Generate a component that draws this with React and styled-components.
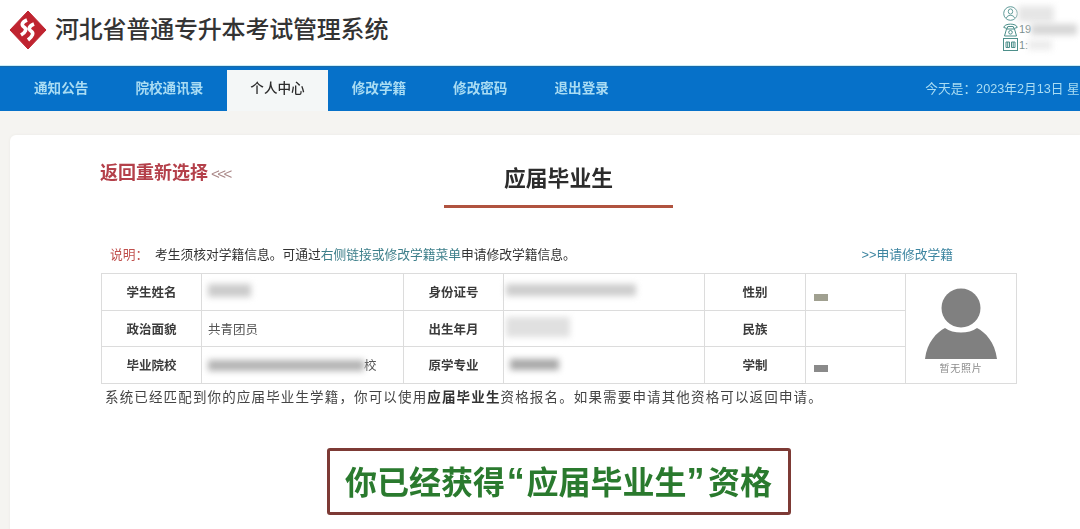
import styled, { createGlobalStyle } from "styled-components";

const GlobalStyle = createGlobalStyle`
  html, body {
    margin: 0;
    padding: 0;
    background: #f5f4f1;
  }
  body {
    font-family: "Liberation Sans", "Noto Sans CJK SC", sans-serif;
    overflow: hidden;
  }
`;

const tabs = ["通知公告", "院校通讯录", "个人中心", "修改学籍", "修改密码", "退出登录"];

function LogoMark() {
  return (
    <svg width="38" height="40" viewBox="0 0 38 40">
      <path d="M19 1 L37 20 L19 39 L1 20 Z" fill="#bf2430" stroke="#bf2430" strokeWidth="1" strokeLinejoin="round" />
      <path
        d="M18 10 C13 12 12 15 15 17 C18 19 17 22 12 25 M25 14 C20 16 19 19 22 21 C25 23 24 26 19 30"
        fill="none"
        stroke="#fff"
        strokeWidth="3.6"
      />
    </svg>
  );
}

function PersonIcon() {
  return (
    <svg width="15" height="15" viewBox="0 0 15 15" fill="none" stroke="#5f9a98" strokeWidth="1">
      <circle cx="7.5" cy="7.5" r="6.8" />
      <ellipse cx="7.5" cy="5.5" rx="2.2" ry="2.6" />
      <path d="M3.5 12 C4 8.5 11 8.5 11.5 12" />
    </svg>
  );
}

function PhoneIcon() {
  return (
    <svg width="15" height="15" viewBox="0 0 15 15" fill="none" stroke="#4d8f8a" strokeWidth="1">
      <path d="M0.8 5.5 C1 1 14 1 14.2 5.5 L10.8 6.5 L10.2 4.5 H4.8 L4.2 6.5 Z" />
      <path d="M3.5 7 H11.5 L13.5 14 H1.5 Z" />
      <circle cx="7.5" cy="10.3" r="1.8" />
    </svg>
  );
}

function FaxIcon() {
  return (
    <svg width="15" height="15" viewBox="0 0 15 15" fill="none" stroke="#4d8f8a" strokeWidth="1">
      <rect x="0.5" y="1.5" width="14" height="12" />
      <path d="M3 5 H6.5 V10.5 H3 Z M8.5 5 H12 V10.5 H8.5 Z M4.7 5 V10.5 M10.2 5 V10.5" />
    </svg>
  );
}

function Avatar() {
  return (
    <svg width="72" height="72" viewBox="0 0 72 72">
      <circle cx="36" cy="20" r="19.5" fill="#808080" />
      <path d="M0 71 C2 54 12 44 20 40 C28 46 44 46 52 40 C60 44 70 54 72 71 Z" fill="#808080" />
    </svg>
  );
}

export default function App() {
  return (
    <Page>
      <GlobalStyle />
      <Header>
        <LogoMark />
        <SiteTitle>河北省普通专升本考试管理系统</SiteTitle>
        <UserBox>
          <UserRow>
            <PersonIcon />
            <Smudge $w={36} $h={16} $tone="#e6e6e6" />
          </UserRow>
          <UserRow>
            <PhoneIcon />
            <UserText>19</UserText>
            <Smudge $w={46} $h={11} $tone="#d6d6d6" />
          </UserRow>
          <UserRow>
            <FaxIcon />
            <UserText>1:</UserText>
            <Smudge $w={24} $h={10} $tone="#ececec" />
          </UserRow>
        </UserBox>
      </Header>

      <NavBar>
        <NavTabs>
          {tabs.map((tab) => (
            <NavTab key={tab} $active={tab === "个人中心"}>
              {tab}
            </NavTab>
          ))}
        </NavTabs>
        <Today>今天是：2023年2月13日 星期一</Today>
      </NavBar>

      <Card>
        <CardHead>
          <BackLink>
            返回重新选择<BackArrows>&lt;&lt;&lt;</BackArrows>
          </BackLink>
          <PageTitle>应届毕业生</PageTitle>
        </CardHead>

        <NoticeRow>
          <Notice>
            <NoticeLabel>说明：</NoticeLabel>
            考生须核对学籍信息。可通过<Teal>右侧链接或修改学籍菜单</Teal>申请修改学籍信息。
          </Notice>
          <ApplyLink>&gt;&gt;申请修改学籍</ApplyLink>
        </NoticeRow>

        <InfoTable>
          <colgroup>
            <col width="100" />
            <col width="202" />
            <col width="100" />
            <col width="201" />
            <col width="101" />
            <col width="100" />
            <col width="111" />
          </colgroup>
          <tbody>
            <tr>
              <Label>学生姓名</Label>
              <Value><Smudge $w={43} $h={13} $tone="#cbcbcb" /></Value>
              <Label>身份证号</Label>
              <Value $tight><Smudge $w={130} $h={12} $tone="#cdcdcd" /></Value>
              <Label>性别</Label>
              <Value><Chip $tone="#a0a090" $drop={12} /></Value>
              <PhotoCell rowSpan={3}>
                <Avatar />
                <PhotoNote>暂无照片</PhotoNote>
              </PhotoCell>
            </tr>
            <tr>
              <Label>政治面貌</Label>
              <Value>共青团员</Value>
              <Label>出生年月</Label>
              <Value $tight><Smudge $w={64} $h={20} $tone="#e0e0e0" /></Value>
              <Label>民族</Label>
              <Value />
            </tr>
            <tr>
              <Label>毕业院校</Label>
              <Value>
                <SchoolLine>
                  <Smudge $w={156} $h={11} $tone="#b4b4b4" />校
                </SchoolLine>
              </Value>
              <Label>原学专业</Label>
              <Value $tight><Indent><Smudge $w={49} $h={11} $tone="#a8a8a8" /></Indent></Value>
              <Label>学制</Label>
              <Value><Chip $tone="#8a8a8a" $drop={8} /></Value>
            </tr>
          </tbody>
        </InfoTable>

        <Summary>
          系统已经匹配到你的应届毕业生学籍，你可以使用<strong>应届毕业生</strong>资格报名。如果需要申请其他资格可以返回申请。
        </Summary>

        <ResultBox>你已经获得<Quote $open>“</Quote>应届毕业生<Quote>”</Quote>资格</ResultBox>
      </Card>
    </Page>
  );
}

const Page = styled.div`
  width: 1080px;
  height: 529px;
  overflow: hidden;
  filter: blur(0.4px);
`;

const Header = styled.header`
  height: 66px;
  box-sizing: border-box;
  padding: 0 0 6px 9px;
  background: #fff;
  display: flex;
  align-items: center;
  gap: 8px;
`;

const SiteTitle = styled.h1`
  margin: 0;
  font-size: 24px;
  line-height: 1;
  font-weight: 500;
  color: #333;
  letter-spacing: -0.2px;
`;

const UserBox = styled.div`
  margin-left: auto;
  width: 77px;
  padding-bottom: 2px;
  display: flex;
  flex-direction: column;
  gap: 0.5px;
`;

const UserRow = styled.div`
  height: 15px;
  display: flex;
  align-items: center;
`;

const UserText = styled.span`
  font-size: 11px;
  color: #7a8f8f;
  margin-left: 1px;
`;

const Smudge = styled.span`
  display: inline-block;
  width: ${(p) => p.$w}px;
  height: ${(p) => p.$h}px;
  background: ${(p) => p.$tone};
  filter: blur(3px);
`;

const Chip = styled.span`
  display: block;
  width: 14px;
  height: 7px;
  margin: ${(p) => p.$drop}px 0 0 2px;
  background: ${(p) => p.$tone};
`;

const NavBar = styled.nav`
  height: 45px;
  box-sizing: border-box;
  border-top: 1px solid #1a6aa8;
  box-shadow: 0 -1px 0 #c9eef8;
  background: #0671c9;
  display: flex;
  align-items: stretch;
  padding-left: 10.5px;
  overflow: hidden;
  white-space: nowrap;
`;

const NavTabs = styled.div`
  display: flex;
  align-items: flex-end;
  flex: none;
`;

const NavTab = styled.div`
  height: 41px;
  box-sizing: border-box;
  padding: 0 23.5px;
  font-size: 13.6px;
  line-height: 38px;
  font-weight: ${(p) => (p.$active ? 500 : 700)};
  color: ${(p) => (p.$active ? "#2c2c2c" : "#a9dcf3")};
  background: ${(p) => (p.$active ? "#f4f7f7" : "transparent")};
`;

const Today = styled.div`
  flex: none;
  margin-left: 293px;
  font-size: 12.7px;
  line-height: 45px;
  color: #a9dcf3;
`;

const Card = styled.main`
  margin: 24px 0 0 10px;
  height: 400px;
  box-sizing: border-box;
  padding: 28px 64px 0 91px;
  background: #fff;
  border-radius: 6px 0 0 0;
  box-shadow: 0 0 3px #ebe9e4;
`;

const CardHead = styled.div`
  display: grid;
  grid-template-columns: 1fr auto 1fr;
  align-items: start;
`;

const BackLink = styled.a`
  margin: 1px 0 0 -1px;
  font-size: 18px;
  line-height: 18px;
  font-weight: 700;
  color: #b4404a;
  white-space: nowrap;
`;

const BackArrows = styled.span`
  margin-left: 3px;
  font-size: 15px;
  font-weight: 400;
  color: #a88;
  letter-spacing: -2.5px;
`;

const PageTitle = styled.h2`
  margin: 0;
  width: 229px;
  height: 42px;
  border-bottom: 3px solid #b0533f;
  font-size: 21.8px;
  line-height: 32px;
  font-weight: 700;
  color: #2c2c2c;
  text-align: center;
`;

const NoticeRow = styled.div`
  margin-top: 38px;
  height: 18px;
  padding: 0 63px 0 9px;
  display: flex;
  justify-content: space-between;
  align-items: center;
  font-size: 12.75px;
  line-height: 18px;
  color: #333;
`;

const Notice = styled.div``;

const NoticeLabel = styled.span`
  display: inline-block;
  width: 45px;
  color: #c0504d;
`;

const Teal = styled.span`
  color: #3d7f8a;
`;

const ApplyLink = styled.a`
  color: #3d85a0;
`;

const InfoTable = styled.table`
  margin-top: 9px;
  width: 915px;
  height: 110px;
  table-layout: fixed;
  border-collapse: collapse;
  font-size: 12.5px;
`;

const Label = styled.td`
  height: 35.5px;
  padding: 0;
  border: 1px solid #dcdcdc;
  text-align: center;
  font-weight: 700;
  color: #3c3c3c;
`;

const Value = styled.td`
  padding: 0 0 0 ${(p) => (p.$tight ? 2 : 6)}px;
  border: 1px solid #dcdcdc;
  color: #555;
`;

const SchoolLine = styled.div`
  display: flex;
  align-items: center;
  line-height: 18px;
  padding-top: 2px;
`;

const Indent = styled.div`
  padding: 3px 0 0 4px;
`;

const PhotoCell = styled.td`
  padding: 14px 0 0;
  border: 1px solid #dcdcdc;
  text-align: center;
  vertical-align: top;
  line-height: 0;
`;

const PhotoNote = styled.div`
  margin-top: 2px;
  font-size: 10px;
  line-height: 14px;
  letter-spacing: 0.8px;
  color: #8c8c8c;
`;

const Summary = styled.p`
  margin: 5px 0 0 4px;
  font-size: 13.5px;
  line-height: 18px;
  letter-spacing: 1.15px;
  white-space: nowrap;
  color: #444;
  strong {
    color: #333;
  }
`;

const ResultBox = styled.div`
  margin: 41px auto 0;
  width: 464px;
  height: 67px;
  box-sizing: border-box;
  border: 3px solid #7d3a35;
  border-radius: 3px;
  font-size: 32px;
  line-height: 61px;
  font-weight: 700;
  color: #2a7a2e;
  text-align: center;
  white-space: nowrap;
`;

const Quote = styled.span`
  display: inline-block;
  width: 21.5px;
  font-size: 36px;
  text-align: ${(p) => (p.$open ? "center" : "left")};
`;
